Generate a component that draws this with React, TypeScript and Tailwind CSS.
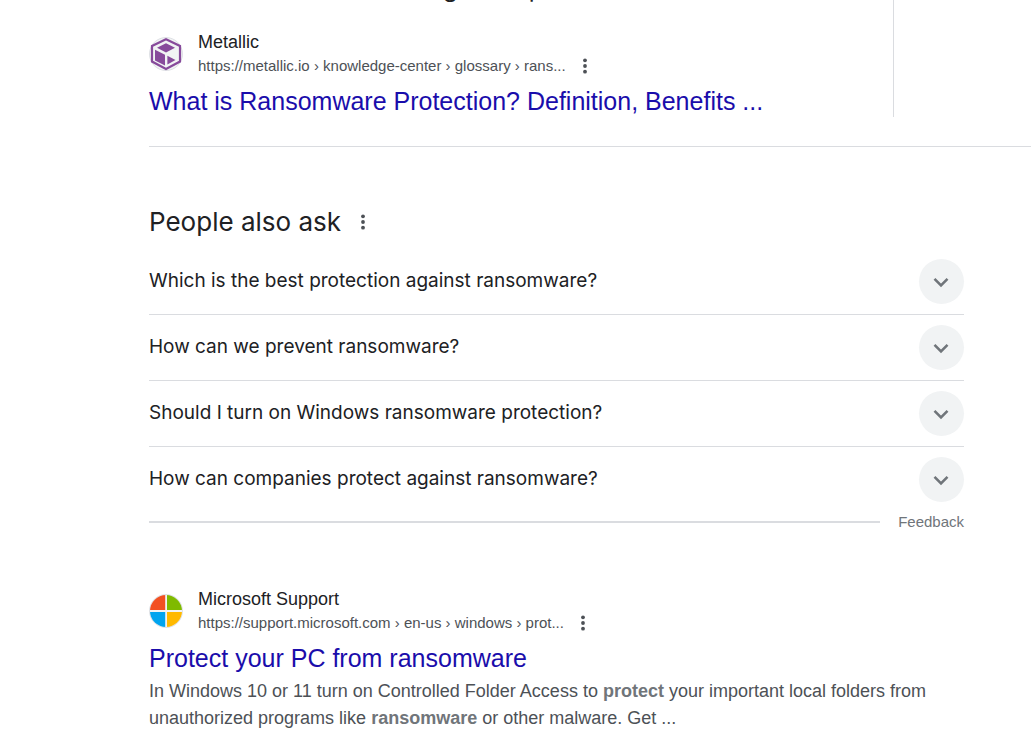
import { useState } from "react";
import type { ReactNode } from "react";

const questions = [
  "Which is the best protection against ransomware?",
  "How can we prevent ransomware?",
  "Should I turn on Windows ransomware protection?",
  "How can companies protect against ransomware?",
];

const MetallicLogo = () => (
  <svg viewBox="0 0 34 34" className="size-[34px] shrink-0" aria-hidden="true">
    <circle cx="17" cy="17" r="16.5" fill="#f1f3f4" stroke="#dfe1e5" />
    <path d="M17 2.2 31 9v15.5L17 32 3 24.5V9z" fill="none" stroke="#874a9b" strokeWidth="2.2" />
    <path d="M17 6.3 26 10.8 17 15.6 8 10.8z" fill="#874a9b" />
    <path d="M6 12.7 16 17.8v10.7L6 23.5z" fill="#874a9b" />
    <path d="M18.4 18.8 26.5 23l-8.1 4.6z" fill="#874a9b" />
  </svg>
);

const MicrosoftLogo = () => (
  <svg viewBox="0 0 34 34" className="size-[34px] shrink-0" aria-hidden="true">
    <clipPath id="ms-circle">
      <circle cx="17" cy="17" r="16" />
    </clipPath>
    <circle cx="17" cy="17" r="16.5" fill="#f1f3f4" stroke="#dfe1e5" />
    <g clipPath="url(#ms-circle)">
      <path d="M0 0h16.2v16H0z" fill="#f25022" />
      <path d="M18 0h16v16H18z" fill="#7fba00" />
      <path d="M0 18h16.2v16H0z" fill="#00a4ef" />
      <path d="M18 18h16v16H18z" fill="#ffb900" />
    </g>
  </svg>
);

const MoreButton = ({ label }: { label: string }) => (
  <button type="button" aria-label={label} className="flex h-5 w-3 items-center justify-center text-[#4d5156]">
    <svg viewBox="0 0 4 16" className="h-4 w-1" fill="currentColor" aria-hidden="true">
      <circle cx="2" cy="2.3" r="1.9" />
      <circle cx="2" cy="8" r="1.9" />
      <circle cx="2" cy="13.7" r="1.9" />
    </svg>
  </button>
);

type ResultProps = {
  logo: ReactNode;
  site: string;
  url: string;
  title: string;
  children?: ReactNode;
};

const Result = ({ logo, site, url, title, children }: ResultProps) => (
  <article>
    <div className="flex items-center gap-[15px]">
      {logo}
      <div>
        <div className="text-lg leading-6 text-[#202124]">{site}</div>
        <div className="flex items-center gap-[13px]">
          <cite className="text-[15px] leading-6 text-[#4d5156] not-italic">{url}</cite>
          <MoreButton label={`About ${site}`} />
        </div>
      </div>
    </div>
    <h3 className="mt-[7px] text-[25px] leading-8">
      <a href="#" className="text-[#1a0dab] hover:underline">{title}</a>
    </h3>
    {children}
  </article>
);

const Question = ({ text }: { text: string }) => {
  const [open, setOpen] = useState(false);

  return (
    <li className="border-b border-[#dadce0] last:border-b-0">
      <button
        type="button"
        aria-expanded={open}
        onClick={() => setOpen(!open)}
        className="flex h-[65px] w-full cursor-pointer items-center justify-between text-left"
      >
        <span>{text}</span>
        <span className="flex size-[45px] items-center justify-center rounded-full bg-[#f1f3f4] text-[#70757a]">
          <svg viewBox="0 0 24 24" className={open ? "size-6 rotate-180" : "size-6"} aria-hidden="true">
            <path d="m4.5 8.8 6.5 6.5 6.5-6.5" fill="none" stroke="currentColor" strokeWidth="2.6" />
          </svg>
        </span>
      </button>
    </li>
  );
};

const App = () => (
  <div className="min-h-screen overflow-hidden bg-white pl-[149px] font-['Liberation_Sans',Arial,sans-serif]">
    <div className="flex justify-between">
      <div className="min-w-0 flex-1">
        <div className="-mt-[25px] flex gap-[71px] pl-[294px] font-[Inter,sans-serif] text-2xl leading-7 text-[#202124]" aria-hidden="true">
          <span>g</span>
          <span>p</span>
        </div>
        <div className="mt-[27px]">
          <Result
            logo={<MetallicLogo />}
            site="Metallic"
            url="https://metallic.io › knowledge-center › glossary › rans..."
            title="What is Ransomware Protection? Definition, Benefits ..."
          />
        </div>
      </div>
      <aside className="w-[138px] border-l border-[#dadce0]" />
    </div>

    <hr className="mt-[29px] border-[#dadce0]" />

    <main className="max-w-[815px]">
      <section className="mt-[57px] font-[Inter,sans-serif] text-[#202124]">
        <div className="flex items-center gap-4">
          <h2 className="text-[26px] leading-9">People also ask</h2>
          <MoreButton label="About People also ask" />
        </div>
        <ul className="mt-[9px] text-[19px]">
          {questions.map((question) => (
            <Question key={question} text={question} />
          ))}
        </ul>
        <div className="flex items-center gap-[18px] font-['Liberation_Sans',Arial,sans-serif]">
          <hr className="flex-1 border-t-2 border-[#dadce0]" />
          <a href="#" className="text-[15px] leading-5 text-[#70757a]">Feedback</a>
        </div>
      </section>

      <div className="mt-[55px]">
        <Result
          logo={<MicrosoftLogo />}
          site="Microsoft Support"
          url="https://support.microsoft.com › en-us › windows › prot..."
          title="Protect your PC from ransomware"
        >
          <p className="mt-1 text-lg leading-[27px] text-[#4d5156]">
            In Windows 10 or 11 turn on Controlled Folder Access to <b className="text-[#70757a]">protect</b> your important local folders from unauthorized programs like <b className="text-[#70757a]">ransomware</b> or other malware. Get ...
          </p>
        </Result>
      </div>
    </main>
  </div>
);

export default App;
